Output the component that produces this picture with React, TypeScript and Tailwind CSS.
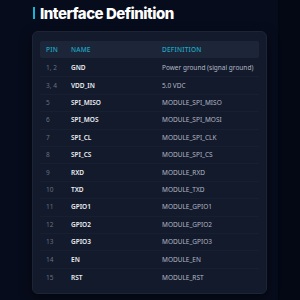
const rows = [
  { pin: "1, 2", name: "GND", def: "Power ground (signal ground)" },
  { pin: "3, 4", name: "VDD_IN", def: "5.0 VDC" },
  { pin: "5", name: "SPI_MISO", def: "MODULE_SPI_MISO" },
  { pin: "6", name: "SPI_MOS", def: "MODULE_SPI_MOSI" },
  { pin: "7", name: "SPI_CL", def: "MODULE_SPI_CLK" },
  { pin: "8", name: "SPI_CS", def: "MODULE_SPI_CS" },
  { pin: "9", name: "RXD", def: "MODULE_RXD" },
  { pin: "10", name: "TXD", def: "MODULE_TXD" },
  { pin: "11", name: "GPIO1", def: "MODULE_GPIO1" },
  { pin: "12", name: "GPIO2", def: "MODULE_GPIO2" },
  { pin: "13", name: "GPIO3", def: "MODULE_GPIO3" },
  { pin: "14", name: "EN", def: "MODULE_EN" },
  { pin: "15", name: "RST", def: "MODULE_RST" },
];

export default function App() {
  return (
    <div className="w-[300px] h-[300px] bg-[#040814] overflow-hidden" style={{ fontFamily: "'Noto Sans', sans-serif" }}>
      <div className="w-[278px] h-full bg-[#070c1c] pl-[32px] pt-[6px]">
        {/* Title */}
        <div className="flex items-center gap-[5px] h-[14px]">
          <div className="ml-[1px] w-[2px] h-[12px] bg-[#19b3d6]" />
          <h2 className="text-white font-extrabold text-[15px] leading-none tracking-[-0.5px]" style={{ fontFamily: "Inter, sans-serif" }}>
            Interface Definition
          </h2>
        </div>

        {/* Card */}
        <div className="mt-[11px] w-[235px] bg-[#121a2b] border border-[#1c2538] rounded-[6px] px-[7px] pt-[9px] pb-[7px] shadow-[0_4px_12px_rgba(0,0,0,0.5)]">
          <div className="flex h-[17px] mb-[2px] items-center bg-[#1c2638] rounded-[2px] text-[6.5px] font-medium text-[#1fa8c4] tracking-[0.2px] whitespace-nowrap">
            <div className="w-[25px] pl-[6px]">PIN</div>
            <div className="w-[91px] pl-[6px]">NAME</div>
            <div className="flex-1 pl-[6px]">DEFINITION</div>
          </div>
          {rows.map((r, i) => (
            <div
              key={i}
              className="flex h-[17.4px] items-center text-[6.5px] whitespace-nowrap border-b border-[#172033] last:border-b-0"
            >
              <div className="w-[25px] pl-[6px] text-[#687185]">{r.pin}</div>
              <div className="w-[91px] pl-[6px] font-semibold text-[#eceff4]">{r.name}</div>
              <div className="flex-1 pl-[6px] text-[#b2b8c5]">{r.def}</div>
            </div>
          ))}
        </div>
      </div>
    </div>
  );
}
